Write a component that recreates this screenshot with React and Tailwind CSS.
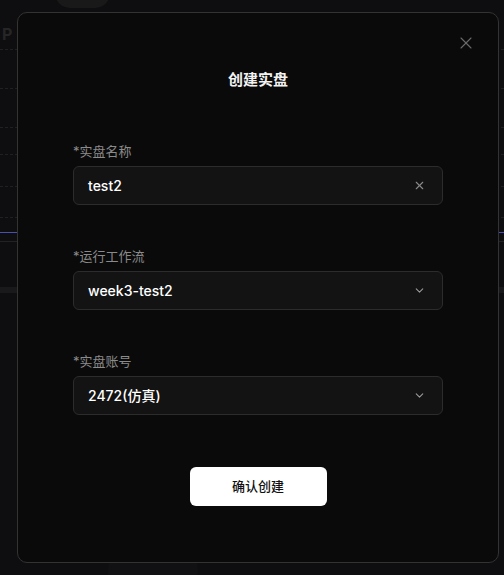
import { X, ChevronDown } from "lucide-react";

const font = { fontFamily: '"Inter", "Noto Sans CJK SC", sans-serif' };

function Field({ label, children }) {
  return (
    <div>
      <div className="text-[13px] leading-[20px] text-[#8a8a8a]">{label}</div>
      <div className="mt-[5px] flex h-[39px] items-center justify-between rounded-[6px] border border-[#2c2c2c] bg-[#131313] pl-[14px] pr-[16px]">
        {children}
      </div>
    </div>
  );
}

// faint chart behind the dialog
function Backdrop() {
  const dashed = [49, 88, 127, 154, 186, 217];
  return (
    <div className="pointer-events-none absolute inset-0">
      {dashed.map((y) => (
        <div
          key={y}
          className="absolute left-0 right-0 border-t border-dashed border-[#202020]"
          style={{ top: y }}
        />
      ))}
      <div className="absolute left-0 right-0 top-[241px] border-t border-[#222]" />
      <div className="absolute left-0 right-0 top-[232px] h-[1px] bg-[#4b4fb0]" />
      <div className="absolute left-0 right-0 top-[287px] h-[6px] bg-[#19191b]" />
      <div className="absolute left-[2px] top-[22px] text-[16px] font-bold text-[#262626]">P</div>
      <div className="absolute left-[55px] top-[-22px] h-[30px] w-[55px] rounded-full bg-[#191919]" />
      <div className="absolute left-[108px] top-[530px] h-[80px] w-[90px] rounded-full bg-[#111114]" />
    </div>
  );
}

export default function App() {
  return (
    <div className="relative h-[575px] w-[504px] overflow-hidden bg-[#0e0e10]" style={font}>
      <Backdrop />
      <div className="relative pl-[17px] pt-[12px]">
        <div className="relative h-[551px] w-[482px] rounded-[10px] border border-[#333] bg-[#0a0a0a] px-[55px] pt-[56px]">
          <button className="absolute right-[22px] top-[20px] text-[#6a6a6a]">
            <X size={20} strokeWidth={1.3} />
          </button>
          <h2 className="text-center text-[15px] font-semibold leading-[22px] text-[#f2f2f2]">
            创建实盘
          </h2>

          <div className="mt-[50px] flex flex-col gap-[41px]">
            <Field label="*实盘名称">
              <span className="text-[14px] font-medium text-white">test2</span>
              <X size={13} strokeWidth={2} className="text-[#8a8a8a]" />
            </Field>
            <Field label="*运行工作流">
              <span className="text-[14px] font-medium text-white">week3-test2</span>
              <ChevronDown size={13} strokeWidth={2} className="text-[#9a9a9a]" />
            </Field>
            <Field label="*实盘账号">
              <span className="text-[14px] font-medium text-white">2472(仿真)</span>
              <ChevronDown size={13} strokeWidth={2} className="text-[#9a9a9a]" />
            </Field>
          </div>

          <div className="mt-[52px] flex justify-center">
            <button className="h-[39px] w-[137px] rounded-[6px] bg-white text-[13px] font-medium text-[#111]">
              确认创建
            </button>
          </div>
        </div>
      </div>
    </div>
  );
}
